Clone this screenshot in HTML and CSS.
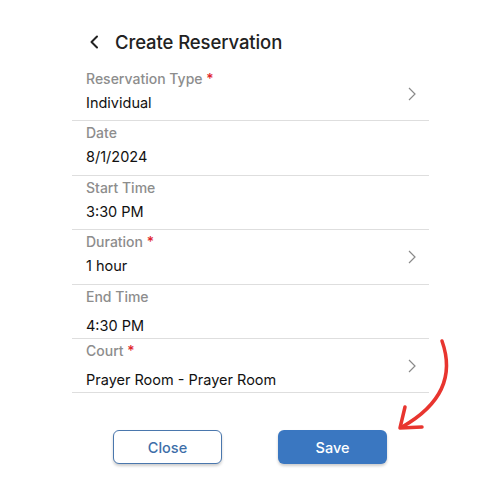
FILE: index.html
```html
<!DOCTYPE html>
<html>
<head>
<meta charset="utf-8">
<link rel="stylesheet" href="styles.css">
</head>
<body>
<div class="page">
  <header class="header">
    <svg class="back" width="10" height="14" viewBox="0 0 10 14"><path d="M8 1.5 L2.5 7 L8 12.5" fill="none" stroke="#222" stroke-width="2" stroke-linecap="round" stroke-linejoin="round"/></svg>
    <h1 class="title">Create Reservation</h1>
  </header>
  <div class="list">
    <div class="row">
      <div class="fields">
        <div class="label">Reservation Type <span class="req">*</span></div>
        <div class="value">Individual</div>
      </div>
      <svg class="chev" width="8" height="14" viewBox="0 0 8 14"><path d="M1 1 L7 7 L1 13" fill="none" stroke="#8a8a8a" stroke-width="1.2"/></svg>
    </div>
    <div class="row">
      <div class="fields">
        <div class="label">Date</div>
        <div class="value">8/1/2024</div>
      </div>
    </div>
    <div class="row">
      <div class="fields">
        <div class="label">Start Time</div>
        <div class="value">3:30 PM</div>
      </div>
    </div>
    <div class="row">
      <div class="fields">
        <div class="label">Duration <span class="req">*</span></div>
        <div class="value">1 hour</div>
      </div>
      <svg class="chev" width="8" height="14" viewBox="0 0 8 14"><path d="M1 1 L7 7 L1 13" fill="none" stroke="#8a8a8a" stroke-width="1.2"/></svg>
    </div>
    <div class="row">
      <div class="fields tall">
        <div class="label">End Time</div>
        <div class="value">4:30 PM</div>
      </div>
    </div>
    <div class="row">
      <div class="fields tall">
        <div class="label">Court <span class="req">*</span></div>
        <div class="value">Prayer Room - Prayer Room</div>
      </div>
      <svg class="chev" width="8" height="14" viewBox="0 0 8 14"><path d="M1 1 L7 7 L1 13" fill="none" stroke="#8a8a8a" stroke-width="1.2"/></svg>
    </div>
  </div>
  <div class="actions">
    <button class="btn btn-close">Close</button>
    <button class="btn btn-save">Save</button>
  </div>
</div>
<svg class="arrow" width="500" height="500" viewBox="0 0 500 500">
  <path d="M442 341 C 453 372, 446 402, 402 427" fill="none" stroke="#e8352f" stroke-width="3.5" stroke-linecap="round"/>
  <path d="M405 407 L400 428 L422 427" fill="none" stroke="#e8352f" stroke-width="3.5" stroke-linecap="round" stroke-linejoin="round"/>
</svg>
</body>
</html>
```
FILE: styles.css
```css
html, body {
  margin: 0;
  padding: 0;
  background: #fff;
}
body {
  font-family: Inter, "Noto Sans", sans-serif;
  color: #111;
  width: 500px;
  height: 500px;
  overflow: hidden;
  position: relative;
}
.page {
  padding: 31px 71px 0 72px;
}
.header {
  display: flex;
  align-items: center;
  height: 22px;
  padding-left: 17px;
}
.back {
  margin-right: 16px;
}
.title {
  margin: 0;
  font-size: 18.5px;
  font-weight: 500;
  color: #222;
  letter-spacing: -0.1px;
}
.list {
  margin-top: 14px;
}
.row {
  box-sizing: border-box;
  height: 54.4px;
  border-bottom: 1px solid #dedede;
  display: flex;
  align-items: center;
  justify-content: space-between;
  padding: 0 13px 0 14px;
}
.fields {
  align-self: flex-start;
  padding-top: 3px;
  display: flex;
  flex-direction: column;
  gap: 5px;
}
.fields.tall {
  gap: 10px;
}
.label {
  font-size: 14px;
  line-height: 18px;
  font-weight: 500;
  color: #8d8d8d;
}
.req {
  color: #e0242b;
}
.value {
  font-size: 14.5px;
  line-height: 20px;
  color: #111;
}
.chev {
  display: block;
}
.actions {
  display: flex;
  justify-content: center;
  gap: 56px;
  margin-top: 37px;
  margin-left: -72px;
  margin-right: -71px;
}
.btn {
  width: 109px;
  height: 34px;
  border-radius: 6px;
  font-family: Inter, "Noto Sans", sans-serif;
  font-size: 14.5px;
  font-weight: 500;
  box-shadow: 0 2px 3px rgba(0,0,0,0.2);
  cursor: pointer;
}
.btn-close {
  background: #fff;
  border: 1.5px solid #4a77ad;
  color: #3d6ea8;
}
.btn-save {
  background: #3a77c1;
  border: none;
  color: #fff;
}
.arrow {
  position: absolute;
  left: 0;
  top: 0;
  pointer-events: none;
}
```
